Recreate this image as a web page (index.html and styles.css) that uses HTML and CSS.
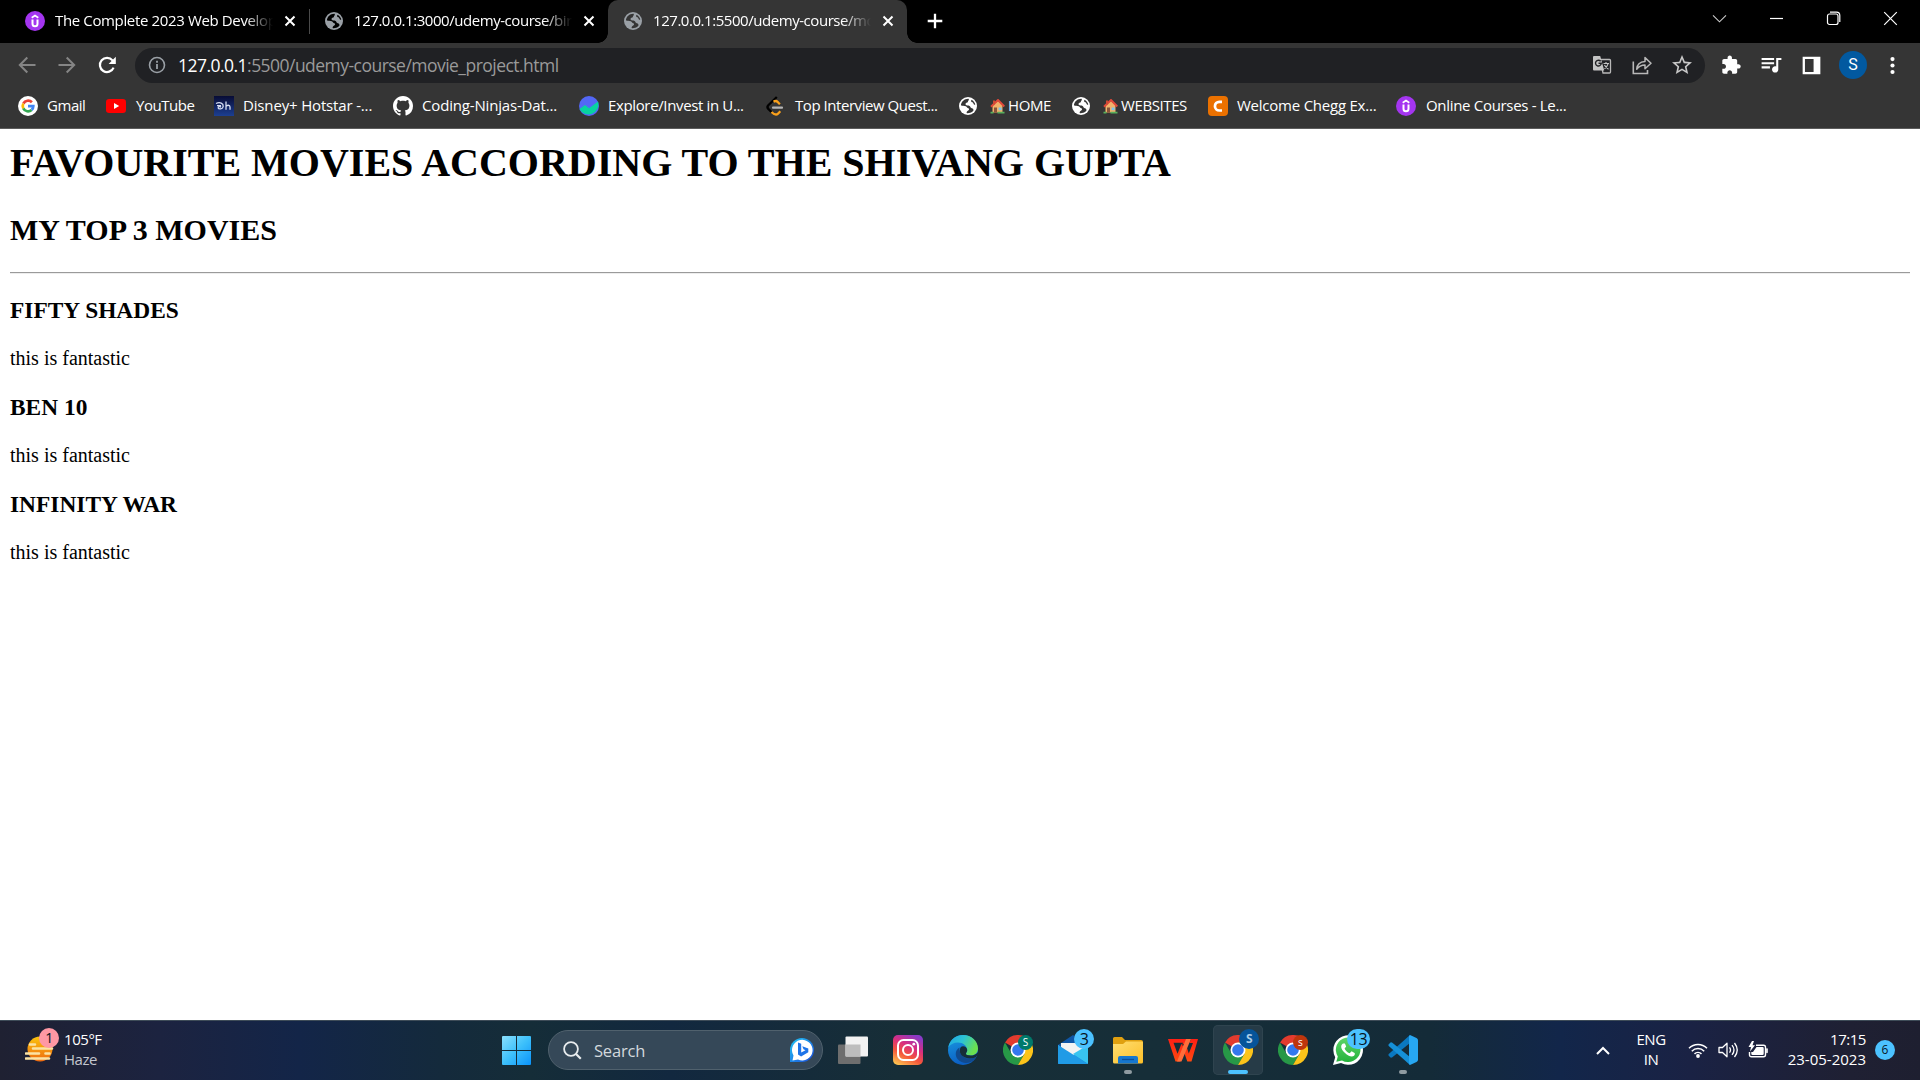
FILE: index.html
```html
<!DOCTYPE html>
<html lang="en">
<head>
<meta charset="utf-8">
<title>Favourite Movies</title>
<link rel="stylesheet" href="styles.css">
</head>
<body>
<svg class="defs" width="0" height="0" aria-hidden="true">
  <defs>
    <linearGradient id="insta" x1="0.2" y1="1" x2="0.7" y2="0"><stop offset="0" stop-color="#fdc04f"/><stop offset=".35" stop-color="#f4553b"/><stop offset=".65" stop-color="#d92e7f"/><stop offset="1" stop-color="#8a3ac8"/></linearGradient>
    <linearGradient id="win" x1="0" y1="0" x2="1" y2="1"><stop offset="0" stop-color="#8ae0fd"/><stop offset=".5" stop-color="#3dc0fb"/><stop offset="1" stop-color="#0a93fb"/></linearGradient>
    <linearGradient id="edgeTop" x1="0" y1="0" x2="1" y2=".4"><stop offset="0" stop-color="#1fa5e6"/><stop offset=".5" stop-color="#2cc3d5"/><stop offset="1" stop-color="#6be04f"/></linearGradient>
    <linearGradient id="edgeLow" x1="0" y1="0" x2=".3" y2="1"><stop offset="0" stop-color="#1a9be2"/><stop offset="1" stop-color="#0b5fc4"/></linearGradient>
    <linearGradient id="folder" x1="0" y1="0" x2="1" y2="1"><stop offset="0" stop-color="#ffde72"/><stop offset="1" stop-color="#fcbf28"/></linearGradient>
    <linearGradient id="mail" x1="0" y1="0" x2="1" y2="1"><stop offset="0" stop-color="#2fb4ee"/><stop offset="1" stop-color="#1683da"/></linearGradient>
    <linearGradient id="sun" x1="0" y1="0" x2="0" y2="1"><stop offset="0" stop-color="#fbc40e"/><stop offset="1" stop-color="#ee6a10"/></linearGradient>
    <linearGradient id="bing" x1="0" y1="0" x2="1" y2="1"><stop offset="0" stop-color="#21c8f6"/><stop offset="1" stop-color="#1b49d8"/></linearGradient>
    <linearGradient id="wps" x1="0" y1="0" x2="0" y2="1"><stop offset="0" stop-color="#ff1f14"/><stop offset="1" stop-color="#ff4a10"/></linearGradient>
    <linearGradient id="green" x1="0" y1="0" x2="0" y2="1"><stop offset="0" stop-color="#5fd668"/><stop offset="1" stop-color="#24b23c"/></linearGradient>
    <linearGradient id="hot" x1="0" y1="0" x2="0" y2="1"><stop offset="0" stop-color="#080c35"/><stop offset="1" stop-color="#1c3f92"/></linearGradient>
    <symbol id="globe" viewBox="0 0 18 18">
      <circle cx="9" cy="9" r="9" fill="currentColor"/>
      <path class="sea" d="M9.6 1.8C5.6 1.6 2.3 4.6 1.9 8.3c1.3 1 3.2.5 4.9 1 1.200.4 1 1.700 2.300 2 1.300.3 1.200 1.300.4 1.900-.9.7-1.900 1.100-1.900 2.700.8.3 1.700.3 2.400.2 1.900-.3 3.400-1.300 4.500-2.700-.1-1.300-.3-2-1.700-2.200-1.500-.2-1.200-1.500-2.200-2.200-1.200-.8-3.200-.1-3.900-1.200-.7-1.200.5-2 1.500-2.200 1.100-.3.400-1.300 1.300-2 .4-.3.500-1.200.1-1.800z"/>
      <path class="sea" d="M12.400 2.800c-.5 1.300-.3 2.300.9 2.500 1.100.200.8 1.200 1.500 1.900.6.6 1.100.6 1.500.4-.5-2.100-2-3.900-3.900-4.800z"/>
    </symbol>
    <symbol id="udemy" viewBox="0 0 20 20">
      <circle cx="10" cy="10" r="10" fill="#a435f0"/>
      <path d="M6.700 6.700 10 4.600l3.300 2.100" fill="none" stroke="#fff" stroke-width="1.700"/>
      <path d="M7.500 8.600v4.100c0 1.500 1 2.500 2.500 2.500s2.500-1 2.500-2.500V8.600" fill="none" stroke="#fff" stroke-width="2"/>
    </symbol>
    <symbol id="x" viewBox="0 0 12 12"><path d="M1.500 1.500l9 9M10.500 1.500l-9 9" stroke="currentColor" stroke-width="2" fill="none"/></symbol>
    <symbol id="house" viewBox="0 0 15 15">
      <path d="M2.500 6v7.500h10V6L8 2z" fill="#f2b26b"/><path d="M1 7.800 8 1l6.300 6.500" fill="none" stroke="#e2483a" stroke-width="2"/>
      <path d="M3 1.500h2v4H3z" fill="#cf4a35"/><path d="M4 8.500h3v5H4z" fill="#8b5338"/><path d="M8.600 8.500h3v2.700h-3z" fill="#79c6ef"/><path d="M.5 12.800h3v1.700h-3zM7.500 12.800h7v1.700h-7z" fill="#58b05c"/>
    </symbol>
    <symbol id="chrome" viewBox="0 0 30 30">
      <path d="M15 15 2 7.500A15 15 0 0 1 28 7.500H15z" fill="#e33b2e"/>
      <path d="M2 7.500A15 15 0 0 0 15 30l6.500-11.250L15 15l-6.500 3.750z" fill="#279847"/>
      <path d="M28 7.500H15V15l6.500 3.750L15 30A15 15 0 0 0 28 7.500z" fill="#fcc41a"/>
      <circle cx="15" cy="15" r="7.500" fill="#fff"/><circle cx="15" cy="15" r="5.800" fill="#3478ee"/>
    </symbol>
  </defs>
</svg>

<header class="browser">
  <div class="tabstrip">
    <div class="tab tab-first">
      <svg class="fav20"><use href="#udemy"/></svg>
      <span class="tab-title t1">The Complete 2023 Web Develop</span>
      <svg class="close"><use href="#x"/></svg>
      <i class="sep"></i>
    </div>
    <div class="tab tab-second">
      <svg class="fav18 on-black"><use href="#globe"/></svg>
      <span class="tab-title">127.0.0.1:3000/udemy-course/bir</span>
      <svg class="close"><use href="#x"/></svg>
    </div>
    <div class="tab tab-active">
      <svg class="fav18 on-grey"><use href="#globe"/></svg>
      <span class="tab-title">127.0.0.1:5500/udemy-course/mo</span>
      <svg class="close"><use href="#x"/></svg>
    </div>
    <svg class="newtab" viewBox="0 0 16 16"><path d="M8 .7v14.600M.7 8h14.600" stroke="#fff" stroke-width="2.300"/></svg>
    <div class="window-buttons">
      <svg viewBox="0 0 15 15"><path d="M1 4.300l6.500 6.500L14 4.300" stroke="#ccc" stroke-width="1.100" fill="none"/></svg>
      <svg viewBox="0 0 15 15"><path d="M1 7.500h13" stroke="#fff" stroke-width="1.200"/></svg>
      <svg viewBox="0 0 15 15"><rect x="1.500" y="3" width="10.500" height="10.500" rx="2" stroke="#fff" stroke-width="1.200" fill="none"/><path d="M4 1.200h6.500q3.300 0 3.300 3.300V11" stroke="#fff" stroke-width="1.200" fill="none"/></svg>
      <svg viewBox="0 0 15 15"><path d="M1.200 1.200l12.600 12.600M13.800 1.200 1.200 13.800" stroke="#fff" stroke-width="1.200"/></svg>
    </div>
  </div>

  <div class="toolbar">
    <div class="nav">
      <svg viewBox="0 0 18 18"><path d="M17.500 9H2M9.300 1.500 1.800 9l7.500 7.500" fill="none" stroke="#858585" stroke-width="2"/></svg>
      <svg viewBox="0 0 18 18"><path d="M.5 9H16M8.700 1.500 16.200 9l-7.500 7.500" fill="none" stroke="#858585" stroke-width="2"/></svg>
      <svg viewBox="0 0 18 18"><path d="M15.600 11.600A7.100 7.100 0 1 1 14.500 4.400L16 6" fill="none" stroke="#fff" stroke-width="2.200"/><path d="M17.800.8v7.200h-7.200z" fill="#fff"/></svg>
    </div>
    <div class="omnibox">
      <svg class="info" viewBox="0 0 18 18"><circle cx="9" cy="9" r="7.500" fill="none" stroke="#9aa0a6" stroke-width="1.600"/><path d="M9 8v5M9 4.800v1.900" stroke="#9aa0a6" stroke-width="1.800"/></svg>
      <span class="url"><b>127.0.0.1</b>:5500/udemy-course/movie_project.html</span>
      <div class="omni-icons">
        <svg viewBox="0 0 20 20"><path d="M8 4.500h9.500q1 0 1 1v11.500q0 1-1 1H11z" fill="none" stroke="#b8b8b8" stroke-width="1.300"/><path d="M2 1h6.200l4 14.500H2q-1 0-1-1V2q0-1 1-1z" fill="#c4c4c4"/><path d="M8.700 6.300A2.900 2.900 0 1 0 9.300 8.300H6.500" fill="none" stroke="#202124" stroke-width="1.400"/><path d="M11.500 8.500H17M14 7v1.500M16 8.800c-.6 2.400-2 3.800-3.500 4.900M12.500 10c.7 1.800 2.200 3 4 4.200" fill="none" stroke="#c4c4c4" stroke-width="1.100"/></svg>
        <svg viewBox="0 0 20 20"><path d="M1.300 6.500V18.500h14.200V15" fill="none" stroke="#b8b8b8" stroke-width="1.600"/><path d="M4.700 14.200c.3-4.900 3.300-7.500 8.300-7.800V2.600l6 5.600-6 5.500V9.900c-3.700 0-6.200 1.400-8.300 4.300z" fill="none" stroke="#b8b8b8" stroke-width="1.500" stroke-linejoin="round"/></svg>
        <svg viewBox="2 2 20 20"><path fill="#c8c8c8" d="M22 9.240l-7.190-.62L12 2 9.190 8.630 2 9.240l5.460 4.730L5.820 21 12 17.270 18.180 21l-1.630-7.030L22 9.240zM12 15.400l-3.760 2.270 1-4.280-3.320-2.880 4.380-.38L12 6.100l1.710 4.040 4.380.38-3.320 2.880 1 4.280L12 15.400z"/></svg>
      </div>
    </div>
    <div class="actions">
      <svg viewBox="0 0 24 24"><path transform="translate(1.500 1.500) scale(.84)" fill="#fff" d="M20.500 11H19V7c0-1.100-.9-2-2-2h-4V3.500C13 2.120 11.880 1 10.500 1S8 2.120 8 3.500V5H4c-1.100 0-1.990.9-1.990 2v3.800H3.500c1.490 0 2.700 1.210 2.700 2.700s-1.210 2.700-2.700 2.700H2V20c0 1.100.9 2 2 2h3.800v-1.500c0-1.490 1.210-2.700 2.700-2.700s2.700 1.210 2.700 2.700V22H17c1.100 0 2-.9 2-2v-4h1.500c1.380 0 2.500-1.120 2.500-2.500S21.880 11 20.500 11z"/></svg>
      <svg viewBox="0 0 24 24"><path transform="translate(-.5 -1.200)" fill="#fff" d="M15 6H3v2h12V6zm0 4H3v2h12v-2zM3 16h8v-2H3v2zM17 6v8.180c-.31-.11-.65-.18-1-.18-1.660 0-3 1.340-3 3s1.340 3 3 3 3-1.340 3-3V8h3V6h-5z"/></svg>
      <svg viewBox="0 0 24 24"><path fill="#fff" fill-rule="evenodd" d="M3.500 3.500h17v17h-17zM5.700 5.700v12.600h8.300V5.700z"/></svg>
      <span class="avatar">S</span>
      <svg class="kebab" viewBox="0 0 24 24"><circle cx="12" cy="5.800" r="2" fill="#fff"/><circle cx="12" cy="12" r="2" fill="#fff"/><circle cx="12" cy="18.200" r="2" fill="#fff"/></svg>
    </div>
  </div>

  <nav class="bookmarks">
    <a><svg viewBox="0 0 20 20"><circle cx="10" cy="10" r="10" fill="#fff"/><g fill="none" stroke-width="2.700"><path d="M5.400 7.500A5.300 5.300 0 0 1 13.900 6.300" stroke="#ea4335"/><path d="M5.300 12.400A5.300 5.300 0 0 1 5.300 7.600" stroke="#fbbc05"/><path d="M13.600 13.900A5.300 5.300 0 0 1 5.300 12.400" stroke="#34a853"/><path d="M10 10.200h5.300c0 1.500-.6 2.800-1.700 3.700" stroke="#4285f4"/></g></svg><span>Gmail</span></a>
    <a><svg viewBox="0 0 20 20"><rect y="3" width="20" height="14" rx="3.200" fill="#f00"/><path d="M8 7v6l5.200-3z" fill="#fff"/></svg><span class="youtube">YouTube</span></a>
    <a><svg viewBox="0 0 20 20"><rect width="20" height="20" fill="url(#hot)"/><path d="M2 7.500c4-2 7.500 0 7.200 3-.3 2.800-4.600 3-5 1.500-.2-1.300 1.800-1.800 2.800-.8M3 9.600h4M12 5.500v8.200M12 10.500c.8-1.600 4-1.900 4 .5v2.700" fill="none" stroke="#d5ddf2" stroke-width="1.300"/></svg><span class="hotstar">Disney+ Hotstar -...</span></a>
    <a><svg viewBox="0 0 16 16"><path fill="#fff" d="M8 0C3.580 0 0 3.580 0 8c0 3.540 2.290 6.530 5.470 7.590.4.070.55-.17.55-.38 0-.19-.01-.82-.01-1.490-2.010.37-2.530-.49-2.690-.94-.09-.23-.48-.94-.82-1.130-.28-.15-.68-.52-.01-.53.63-.01 1.080.58 1.230.82.72 1.210 1.870.87 2.330.66.070-.52.28-.87.51-1.070-1.780-.2-3.640-.89-3.640-3.950 0-.87.31-1.590.82-2.150-.08-.2-.36-1.020.08-2.120 0 0 .67-.21 2.200.82.64-.18 1.320-.27 2-.27s1.360.09 2 .27c1.530-1.040 2.200-.82 2.200-.82.44 1.100.16 1.920.08 2.120.51.56.82 1.270.82 2.150 0 3.070-1.870 3.750-3.650 3.950.29.25.54.73.54 1.480 0 1.070-.01 1.930-.01 2.200 0 .21.15.46.55.38A8.010 8.010 0 0 0 16 8c0-4.420-3.580-8-8-8z"/></svg><span class="ninjas">Coding-Ninjas-Dat...</span></a>
    <a><svg viewBox="0 0 20 20"><circle cx="10" cy="10" r="10" fill="#5367f5"/><path d="M.5 13 6 9l4 3.300L19 5.600A10 10 0 0 1 .5 13z" fill="#08d2a0"/></svg><span class="groww">Explore/Invest in U...</span></a>
    <a class="leetcode"><svg viewBox="0 0 20 20"><path d="M11.800 1 3.300 9.300q-1.700 1.800 0 3.600l3.400 3.400" fill="none" stroke="#000" stroke-width="2.300"/><path d="M8.600 5.700q2.200-1.500 4.300.5l2 2" fill="none" stroke="#f9a01b" stroke-width="2.300"/><path d="M6.500 16q4 4 6.500 1.700l2.300-2.400" fill="none" stroke="#f9a01b" stroke-width="2.300"/><path d="M8 11.700h9" stroke="#b5b5b5" stroke-width="2.200" stroke-linecap="round"/></svg><span>Top Interview Quest...</span></a>
    <a><svg class="on-grey white"><use href="#globe"/></svg><svg class="house"><use href="#house"/></svg><span class="home">HOME</span></a>
    <a><svg class="on-grey white"><use href="#globe"/></svg><svg class="house"><use href="#house"/></svg><span class="home">WEBSITES</span></a>
    <a><svg viewBox="0 0 20 20"><rect width="20" height="20" rx="4" fill="#eb7100"/><path d="M14 5.800H11.300A4.200 4.200 0 0 0 11.300 14.500H14" fill="none" stroke="#fff" stroke-width="2.700"/></svg><span class="chegg">Welcome Chegg Ex...</span></a>
    <a><svg><use href="#udemy"/></svg><span class="courses">Online Courses - Le...</span></a>
  </nav>
</header>

<main class="page">
  <h1>FAVOURITE MOVIES ACCORDING TO THE SHIVANG GUPTA</h1>
  <h2>MY TOP 3 MOVIES</h2>
  <hr>
  <h3>FIFTY SHADES</h3>
  <p>this is fantastic</p>
  <h3>BEN 10</h3>
  <p>this is fantastic</p>
  <h3>INFINITY WAR</h3>
  <p>this is fantastic</p>
</main>

<footer class="taskbar">
  <div class="weather">
    <div class="sun">
      <svg viewBox="0 0 30 30"><circle cx="15" cy="15" r="12.500" fill="url(#sun)"/><path d="M5 10.500h5M8 14.500h19M1 19.500h13M20.500 19.500h4M1 24.500h23" stroke="#fbe3a4" stroke-width="2.600" stroke-linecap="round"/></svg>
      <span class="badge pink">1</span>
    </div>
    <div class="weather-text"><span>105°F</span><span class="dim">Haze</span></div>
  </div>

  <div class="apps">
    <svg class="start" viewBox="0 0 29 29"><path fill="url(#win)" d="M1 0h13v14H0V1q0-1 1-1zM15 0h13q1 0 1 1v13H15zM0 15h14v14H1q-1 0-1-1zM15 15h14v13q0 1-1 1H15z"/></svg>
    <div class="search">
      <svg class="lens" viewBox="0 0 19 19"><circle cx="8" cy="8" r="6.900" fill="none" stroke="#e8ecee" stroke-width="1.800"/><path d="M13 13l4.800 4.800" stroke="#e8ecee" stroke-width="2.200"/></svg>
      <span>Search</span>
      <svg class="bing" viewBox="0 0 26 26"><path d="M1 25V13A12 12 0 1 1 13 25z" fill="url(#bing)"/><path d="M3.500 23.500l1-5A10.300 10.300 0 1 1 9 22.500z" fill="#fff"/><path d="M9 5.500l3.200 1.200v8.800l4.300-2.300-2-1-1.200-3 6 2.200v3.800l-7.200 4.200L9 17.500z" fill="#1e74e8"/></svg>
    </div>
    <div class="cell"><svg viewBox="0 0 30 30"><rect x="0" y="9.500" width="22.500" height="19.500" rx="1" fill="#6e6e6e"/><rect x="7.500" y="1.500" width="22.500" height="20" rx="1" fill="#f2f2f2"/><path d="M7.500 9.500h15v12h-15z" fill="#bdbdbd"/></svg></div>
    <div class="cell"><svg viewBox="0 0 30 30"><rect width="30" height="30" rx="5" fill="url(#insta)"/><rect x="5" y="5" width="20" height="20" rx="5.500" fill="none" stroke="#fff" stroke-width="2"/><circle cx="15" cy="15" r="5" fill="none" stroke="#fff" stroke-width="2"/><circle cx="20.800" cy="9.200" r="1.400" fill="#fff"/></svg></div>
    <div class="cell"><svg viewBox="0 0 30 30"><circle cx="15" cy="15" r="15" fill="url(#edgeLow)"/><path d="M.3 12.500C1.500 5 7.500 0 15 0c8.500 0 15 6.200 15 13.500 0 4.500-3.500 7-7.500 7-3 0-5-1-4.500-2.300.5-1 1.200-1.500 1.200-3.200C19.200 11 15 7.500 10 7.500c-4.500 0-8 2-9.700 5z" fill="url(#edgeTop)"/><path d="M11.500 12.500c-4 2-5.200 8-1.500 12 4 4.300 11 5 16 .3.800-.8 1.500-1.600 2-2.600-5 2.600-10.500 1.500-13.500-1.200-2.500-2.300-3.500-5.500-3-8.500z" fill="#114a8e"/><path d="M12.500 12.500c-1.500 3.500-.5 6.500 2 8.500 3.500 2.800 8.500 3.300 13.200 1.200l2.300-3v-2c-2 2.500-4.500 3.300-7.500 3.300-3 0-5-1-4.500-2.300.5-1 1.200-1.500 1.200-3.200 0-3-4.500-5-6.700-2.500z" fill="#162e38"/></svg></div>
    <div class="cell"><svg><use href="#chrome"/></svg><span class="mini teal">S</span></div>
    <div class="cell"><svg viewBox="0 0 30 30"><path d="M0 10 15 0l15 10v5H0z" fill="#0f56a6"/><path d="M3 8h24v8l-12 8L3 16z" fill="#f3f3f3"/><path d="M0 10v18q0 1 1 1h28q1 0 1-1V10L15 21z" fill="url(#mail)"/><path d="M30 10v19L15 19z" fill="#38c4f0"/><path d="M0 10 30 29H1q-1 0-1-1z" fill="#209be6"/></svg><span class="badge blue">3</span></div>
    <div class="cell"><svg viewBox="0 0 30 30"><path d="M0 3.500q0-1.500 1.500-1.500h7.500l3 3H28q2 0 2 2v6H0z" fill="#e0a010"/><path d="M0 9h10l3-2.500h16q1 0 1 1V27q0 1.500-1.500 1.500H1.500Q0 28.500 0 27z" fill="url(#folder)"/><path d="M5 28.500V23q0-2 2-2h16q2 0 2 2v5.500z" fill="#1677cf"/><path d="M9 24.500h12" stroke="#0b4f9b" stroke-width="1.300"/></svg><i class="run"></i></div>
    <div class="cell"><svg viewBox="0 0 30 30"><path fill="url(#wps)" fill-rule="evenodd" d="M0 4h19l-2.500 6.500H14l1-2.800H5.500l4 11 3.800-9.500h4.500l3 9.300L25 8h-3.500L23 4h7l-6.500 22.500h-4.200L16 17l-3.800 9.500H7.500z"/><path d="M18 4h5l-9.500 22.500H9z" fill="#ff6d3a"/></svg></div>
    <div class="cell active"><svg><use href="#chrome"/></svg><span class="badge navy">S</span><i class="run on"></i></div>
    <div class="cell"><svg><use href="#chrome"/></svg><span class="mini red">s</span></div>
    <div class="cell"><svg viewBox="0 0 30 30"><path d="M0 30l2.200-7.800A14.800 14.800 0 1 1 8 28z" fill="#fff"/><path d="M3.300 26.700l1.500-5.300A12.300 12.300 0 1 1 9 25.400z" fill="url(#green)"/><path d="M10 8.500c-3 2-2 5.500 1.500 9s7.500 5 9.500 3.200c1-.9 1-2.200.6-2.700l-3-1.700-2 2c-2.500-.9-4.200-2.700-5-4.800l1.600-1.900-1.300-3.200z" fill="#fff"/></svg><span class="badge blue wide">13</span></div>
    <div class="cell"><svg viewBox="0 0 30 30"><path d="M22 0v8L4 22.500l-1.200.2L.5 20.500v-1.200z" fill="#0a78c0"/><path d="M22 30v-8L4 7.500l-1.200-.2L.5 9.500v1.200z" fill="#1590d8"/><path d="M22 0l6.500 3q1.500.7 1.500 2.200v19.600q0 1.500-1.500 2.200L22 30l-1-1V1z" fill="#27a7f2"/></svg><i class="run"></i></div>
  </div>

  <div class="tray">
    <svg class="up" viewBox="0 0 14 9"><path d="M1 8l6-6 6 6" fill="none" stroke="#fff" stroke-width="2"/></svg>
    <div class="lang"><span>ENG</span><span>IN</span></div>
    <div class="status">
      <svg viewBox="0 0 20 16"><path d="M1 6.300a12.700 12.700 0 0 1 18 0M3.800 9.200a8.700 8.700 0 0 1 12.400 0M6.500 11.900a5 5 0 0 1 7 0" fill="none" stroke="#fff" stroke-width="1.500"/><circle cx="10" cy="14" r="1.900" fill="#fff"/></svg>
      <svg viewBox="0 0 20 18"><path d="M1 6.500h3.500L9 2.200v13.600L4.500 11.500H1z" fill="none" stroke="#fff" stroke-width="1.300" stroke-linejoin="round"/><path d="M11.500 6.300q2 2.700 0 5.400M14 4.200q4 4.800 0 9.600M16.500 2q5.500 7 0 14" fill="none" stroke="#fff" stroke-width="1.300"/></svg>
      <svg viewBox="0 0 20 18"><path d="M8 4.200h7.500q2 0 2 2v7.600q0 2-2 2h-12q-2 0-2-2V11" fill="none" stroke="#fff" stroke-width="1.400"/><path d="M8.500 6h6q1.200 0 1.200 1.200v5.600q0 1.200-1.200 1.200h-10q-1.200 0-1.200-1.200V11H5z" fill="#fff"/><path d="M18.300 7.700h1.200v4h-1.200z" fill="#fff" stroke="#fff" stroke-width=".6"/><path d="M4 0 .5 6H3l-1 4.500L7 4.200H4.500L6 0z" fill="#fff"/></svg>
    </div>
    <div class="clock"><span>17:15</span><span class="date">23-05-2023</span></div>
    <span class="notify">6</span>
  </div>
</footer>
</body>
</html>
```
FILE: styles.css
```css
* { box-sizing: border-box; }
body {
  margin: 0;
  width: 1920px;
  height: 1080px;
  overflow: hidden;
  display: flex;
  flex-direction: column;
  background: #fff;
}
.defs { position: absolute; }
svg { flex: none; display: block; }
.browser, .taskbar {
  font-family: "Open Sans", "Noto Sans", sans-serif;
  font-size: 15px;
  letter-spacing: -0.45px;
  color: #fff;
  white-space: nowrap;
}

/* Tab strip */
.tabstrip { height: 43px; background: #000; display: flex; align-items: center; }
.tab { height: 43px; display: flex; align-items: center; padding-bottom: 1px; }
.tab-first { width: 310px; padding-left: 25px; }
.tab-second { width: 298px; padding-left: 15px; }
.tab-active { position: relative; width: 299px; padding-left: 16px; background: #353535; border-radius: 10px 10px 0 0; }
.tab-active::before, .tab-active::after {
  content: "";
  position: absolute;
  bottom: 0;
  width: 10px;
  height: 10px;
}
.tab-active::before { left: -10px; background: radial-gradient(circle at 0 0, #000 9.5px, #353535 10px); }
.tab-active::after { right: -10px; background: radial-gradient(circle at 100% 0, #000 9.5px, #353535 10px); }
.fav20 { width: 20px; height: 20px; margin-right: 10px; }
.fav18 { width: 18px; height: 18px; margin-right: 11px; color: #9aa0a6; }
.on-black { --sea: #000; }
.on-grey { --sea: #353535; }
.sea { fill: var(--sea); }
.tab-title {
  width: 218px;
  padding-bottom: 2px;
  -webkit-mask-image: linear-gradient(90deg, #000 190px, transparent 218px);
  mask-image: linear-gradient(90deg, #000 190px, transparent 218px);
}
.t1 { letter-spacing: -0.36px; }
.close { width: 12px; height: 12px; margin-left: 11px; }
.sep { width: 1px; height: 25px; margin-left: 13px; background: #4a4a4a; }
.newtab { width: 16px; height: 16px; margin: 0 0 1px 20px; }
.window-buttons { display: flex; gap: 42px; margin: 0 22px 6px auto; }
.window-buttons svg { width: 15px; height: 15px; }

/* Toolbar */
.toolbar { height: 44px; background: #353535; display: flex; align-items: center; padding-left: 18px; }
.nav { display: flex; gap: 22px; width: 117px; flex: none; }
.nav svg { width: 18px; height: 18px; }
.omnibox { flex: none; width: 1570px; height: 35px; border-radius: 18px; background: #202124; display: flex; align-items: center; padding: 0 13px; }
.info { width: 18px; height: 18px; margin-right: 12px; }
.url { font-size: 17.5px; letter-spacing: -0.53px; color: #9a9a9a; }
.url b { font-weight: 400; color: #fff; }
.omni-icons { display: flex; gap: 20px; margin-left: auto; }
.omni-icons svg { width: 20px; height: 20px; }
.actions { display: flex; align-items: center; gap: 15px; margin-left: 14px; }
.actions svg { width: 25px; height: 25px; }
.actions .kebab { margin-left: -2px; }
.avatar { width: 28px; height: 28px; border-radius: 50%; background: #0259a0; text-align: center; line-height: 28px; font-family: Roboto, sans-serif; font-size: 16px; letter-spacing: 0; }

/* Bookmarks bar */
.bookmarks {
  height: 42px;
  background: #353535;
  border-bottom: 1px solid #5c5c5c;
  display: grid;
  grid-template-columns: 88px 108px 179px 186px 188px 192px 113px 136px 188px auto;
  align-items: center;
  padding: 0 0 3px 18px;
}
.bookmarks a { display: flex; align-items: center; gap: 9px; }
.bookmarks span { padding-bottom: 2px; }
.bookmarks svg { width: 20px; height: 20px; }
.bookmarks svg.white { width: 18px; height: 18px; color: #fff; margin-right: 4px; }
.bookmarks svg.house { width: 15px; height: 15px; margin-right: -6px; }
.youtube { margin-left: 1px; }
.hotstar { letter-spacing: -0.16px; }
.ninjas { letter-spacing: -0.17px; }
.groww { letter-spacing: -0.36px; }
.home { letter-spacing: -0.4px; }
.chegg { letter-spacing: -0.23px; }
.courses { margin-left: 1px; letter-spacing: -0.31px; }
.bookmarks .leetcode { margin-left: -2px; gap: 10px; }

/* Movie page */
.page { flex: 1; padding: 10px; font-family: "Liberation Serif", "Times New Roman", serif; font-size: 20px; color: #000; }
.page h1 { font-size: 40px; margin: 0 0 26.8px; }
.page h2 { font-size: 30px; margin: 0 0 24.9px; }
.page h3 { font-size: 23.4px; margin: 23.4px 0; }
.page p { margin: 20px 0; }
.page hr { margin: 0; border: 0; height: 2px; background: linear-gradient(#9a9a9a 50%, #ededed 50%); }

/* Taskbar */
.taskbar {
  height: 60px;
  box-shadow: inset 0 1px #3e4c58;
  background: linear-gradient(90deg, #1f2132 0, #1c2340 160px, #132548 300px, #142a3c 440px, #152d38 530px, #12283f 670px, #172e37 900px, #162e38 1150px, #142b38 1430px, #12264a 1560px, #1a2244 1690px, #1f2033 1850px, #1e1f30 1920px);
  display: flex;
  align-items: center;
}
.weather { width: 502px; padding-left: 25px; display: flex; align-items: center; gap: 8px; }
.sun { position: relative; width: 31px; height: 30px; margin-top: -3px; }
.sun svg { width: 30px; height: 30px; }
.weather-text, .lang, .clock { display: flex; flex-direction: column; line-height: 20px; padding-bottom: 2px; }
.dim { color: #c3c6cf; }
.badge {
  position: absolute;
  width: 20px;
  height: 20px;
  border-radius: 50%;
  font-size: 14px;
  line-height: 20px;
  text-align: center;
  letter-spacing: -0.5px;
  color: #06131c;
}
.pink { left: 14px; top: -6px; background: #ff98a4; }
.blue, .navy { right: 4px; top: 4px; background: #4cc2ff; }
.blue { font-size: 16px; }
.wide { width: 23px; border-radius: 10px; right: 3px; }
.navy { background: #06549a; color: #a9cbe6; font-weight: 700; font-size: 12px; }
.apps { display: flex; align-items: center; }
.start { width: 29px; height: 29px; margin-right: 17px; }
.search {
  width: 275px;
  height: 40px;
  margin-right: 5px;
  border: 1px solid #50616d;
  border-radius: 20px;
  background: #354858;
  display: flex;
  align-items: center;
  padding: 0 7px 0 14px;
  font-size: 16.5px;
  letter-spacing: -0.2px;
  color: #d3d9dd;
}
.lens { width: 19px; height: 19px; margin-right: 12px; }
.bing { width: 26px; height: 26px; margin-left: auto; }
.cell { position: relative; width: 50px; height: 50px; margin-right: 5px; display: flex; align-items: center; justify-content: center; border-radius: 5px; }
.cell svg { width: 30px; height: 30px; }
.active { background: #263b47; box-shadow: inset 0 0 0 1px #2f444f; }
.mini { position: absolute; left: 25px; top: 10px; width: 15px; height: 15px; border-radius: 50%; text-align: center; font-size: 10px; line-height: 14px; letter-spacing: 0; }
.teal { background: #00796b; }
.red { background: #bf360c; }
.run { position: absolute; bottom: 1px; left: 21px; width: 8px; height: 4px; border-radius: 2px; background: #8f9ba1; }
.on { left: 15px; width: 20px; background: #4cc2ff; }
.tray { margin-left: auto; display: flex; align-items: center; padding-right: 25px; }
.up { width: 14px; height: 9px; margin-right: 26px; }
.lang { width: 30px; text-align: center; margin-right: 22px; align-items: center; }
.status { display: flex; gap: 10px; margin-right: 20px; }
.status svg { width: 20px; height: 18px; }
.clock { width: 78px; align-items: flex-end; margin-right: 9px; }
.date { letter-spacing: 0; }
.notify { width: 20px; height: 20px; border-radius: 50%; background: #4cc2ff; color: #08161f; text-align: center; font-size: 12px; line-height: 20px; letter-spacing: 0; }
```
